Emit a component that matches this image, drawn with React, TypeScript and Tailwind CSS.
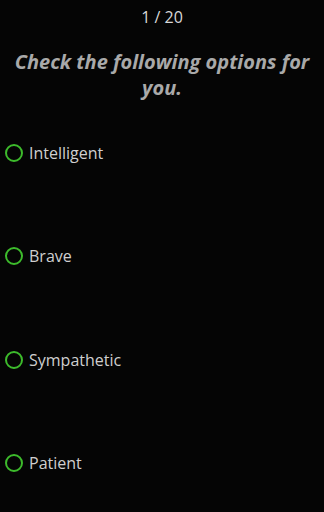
const options = ['Intelligent', 'Brave', 'Sympathetic', 'Patient'];

export default function App() {
  return (
    <div className="w-[324px] h-[512px] overflow-hidden bg-[#050505] font-['Open_Sans',sans-serif]">
      <div className="h-[34px] flex items-center justify-center text-[16px] text-[#d8d8d8]">1 / 20</div>
      <h1 className="mt-[15px] px-2 text-center text-[20px] leading-[26px] font-bold italic text-[#a9a9a9]">
        Check the following options for you.
      </h1>
      <div className="flex flex-col">
        {options.map((o) => (
          <div key={o} className="h-[103.5px] flex items-center pl-[5px]">
            <span className="w-[18px] h-[18px] rounded-full border-2 border-[#3dbb2c]" />
            <span className="ml-[6px] text-[16px] text-[#cfcfcf]">{o}</span>
          </div>
        ))}
      </div>
    </div>
  );
}
